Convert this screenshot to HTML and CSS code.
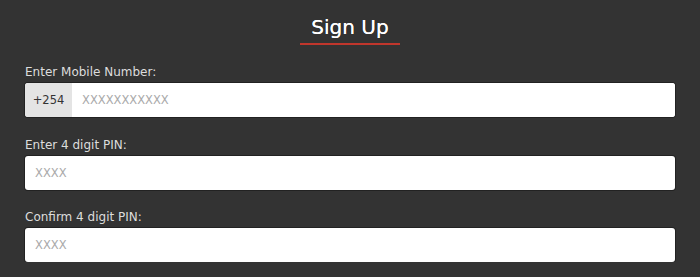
FILE: index.html
```html
<!DOCTYPE html>
<html>
<head>
<meta charset="utf-8">
<link rel="stylesheet" href="styles.css">
</head>
<body>
<div class="page">
  <div class="title-wrap">
    <h1 class="title">Sign Up</h1>
  </div>
  <form class="form">
    <div class="field">
      <label class="label">Enter Mobile Number:</label>
      <div class="input-group">
        <span class="prefix">+254</span>
        <input class="input input-phone" type="text" placeholder="XXXXXXXXXXX">
      </div>
    </div>
    <div class="field">
      <label class="label">Enter 4 digit PIN:</label>
      <input class="input" type="text" placeholder="XXXX">
    </div>
    <div class="field">
      <label class="label">Confirm 4 digit PIN:</label>
      <input class="input" type="text" placeholder="XXXX">
    </div>
  </form>
</div>
</body>
</html>
```

FILE: styles.css
```css
html, body {
  margin: 0;
  padding: 0;
  background: #333333;
}
body {
  font-family: "DejaVu Sans", "Noto Sans", sans-serif;
  color: #e6e6e6;
}
.page {
  padding: 0 25px;
}
.title-wrap {
  display: flex;
  justify-content: center;
  padding-top: 14px;
}
.title {
  margin: 0;
  font-size: 20px;
  font-weight: normal;
  line-height: 26px;
  color: #ffffff;
  width: 100px;
  text-align: center;
  padding-bottom: 3px;
  border-bottom: 2px solid #c0362c;
  text-shadow: 0 0 0.4px #fff;
}
.form {
  display: flex;
  flex-direction: column;
  gap: 19.5px;
  padding-top: 19px;
}
.field {
  display: flex;
  flex-direction: column;
  gap: 3px;
}
.label {
  font-size: 12px;
  line-height: 16px;
  color: #dddddd;
}
.input-group {
  display: flex;
  height: 34px;
  background: #ffffff;
  border-radius: 3px;
  overflow: hidden;
  box-shadow: 0 0 0 1px #222;
}
.prefix {
  width: 47px;
  background: #e4e4e4;
  color: #333;
  font-size: 11.5px;
  display: flex;
  align-items: center;
  justify-content: center;
}
.input {
  box-sizing: border-box;
  height: 34px;
  border: none;
  border-radius: 3px;
  background: #fff;
  padding: 0 10px;
  font-family: inherit;
  font-size: 11.5px;
  outline: none;
  box-shadow: 0 0 0 1px #222;
}
.input-phone {
  flex: 1;
  border-radius: 0;
  box-shadow: none;
}
.input::placeholder {
  color: #aaaaaa;
}
```
